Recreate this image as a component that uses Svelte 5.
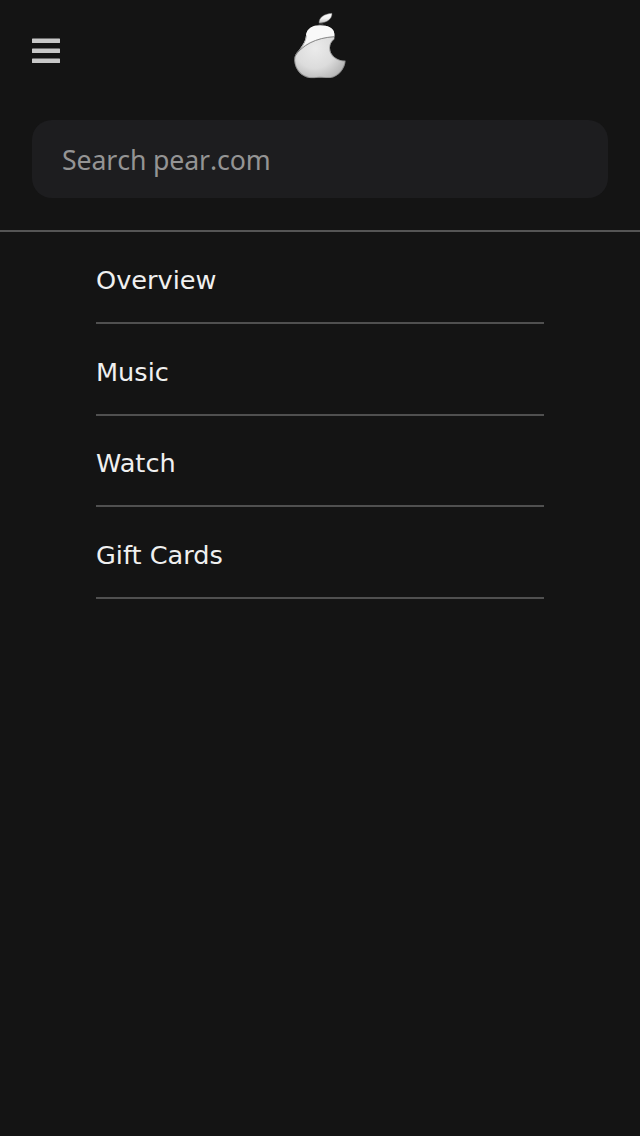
<script>
  const links = ['Overview', 'Music', 'Watch', 'Gift Cards'];
</script>

<div class="page">
  <header>
    <button class="toggle" aria-label="Menu">
      <svg width="28" height="26" viewBox="0 0 28 26">
        <g fill="#c8c8c8">
          <rect x="0" y="0.5" width="28" height="4.5" rx=".6" />
          <rect x="0" y="10.5" width="28" height="4.5" rx=".6" />
          <rect x="0" y="20.5" width="28" height="4.5" rx=".6" />
        </g>
      </svg>
    </button>
    <svg class="logo" width="80" height="80" viewBox="0 0 240 240">
      <defs>
        <radialGradient id="body" cx="105" cy="130" r="100" gradientUnits="userSpaceOnUse">
          <stop offset="0" stop-color="#ebebeb" />
          <stop offset=".6" stop-color="#dcdcdc" />
          <stop offset="1" stop-color="#b8b8b8" />
        </radialGradient>
        <linearGradient id="leaf" x1="0" y1="0" x2="0" y2="1">
          <stop offset="0" stop-color="#ffffff" />
          <stop offset=".55" stop-color="#f0f0f0" />
          <stop offset="1" stop-color="#bcbcbc" />
        </linearGradient>
        <clipPath id="shape">
          <path d="M120 61C97 61 81 71 78 91C77 109 68 121 57 135C48 144 42 154 43 167C45 196 65 214 88 219C101 221 109 218 120 218C132 218 137 220 151 219C177 214 195 191 197 167C169 167 150 150 150 129C150 118 155 109 163 103V87C163 70 144 61 120 61Z" />
        </clipPath>
      </defs>
      <g clip-path="url(#shape)">
        <rect width="240" height="240" fill="url(#body)" />
        <path d="M30 160C57 122 103 96 170 94V50H30Z" fill="#f9f9f9" />
        <path d="M43 155C66 122 105 98 165 95" fill="none" stroke="#868686" stroke-width="3" />
        <path d="M78 91C77 109 68 121 57 135C48 144 42 154 43 167C45 196 65 214 88 219C101 221 109 218 120 218C132 218 137 220 151 219C177 214 195 191 197 167C169 167 150 150 150 129C150 118 155 109 163 103" fill="none" stroke="#606060" stroke-opacity=".55" stroke-width="5" />
      </g>
      <path d="M117 54C116 38 133 26 156 25C157 43 138 55 117 54Z" fill="url(#leaf)" stroke="#666" stroke-width="1.5" />
      <path d="M116 58C121 56 126 57 130 58" fill="none" stroke="#777" stroke-width="2" />
    </svg>
  </header>

  <div class="search">
    <input type="text" placeholder="Search pear.com" aria-label="Search pear.com" />
  </div>

  <nav>
    {#each links as link}
      <a href="#top">{link}</a>
    {/each}
  </nav>
</div>

<style>
  :global(body) {
    background: #141414;
  }
  .page {
    min-height: 1136px;
    background: #141414;
    font-family: "DejaVu Sans", sans-serif;
  }
  header {
    height: 120px;
    box-sizing: border-box;
    display: grid;
    grid-template-columns: 28px 80px 28px;
    justify-content: space-between;
    align-items: start;
    padding: 5px 32px 0;
  }
  .toggle {
    margin: 33px 0 0;
    padding: 0;
    border: 0;
    background: none;
    height: 26px;
  }
  svg {
    display: block;
  }
  .search {
    padding: 0 32px 32px;
    border-bottom: 2px solid #555;
  }
  input {
    display: block;
    box-sizing: border-box;
    width: 100%;
    height: 78px;
    padding: 2px 30px;
    border: 0;
    border-radius: 20px;
    background: #1d1d1f;
    color: #f5f5f7;
    font: 26.67px "Noto Sans", sans-serif;
    font-kerning: none;
    letter-spacing: -0.11px;
    outline: none;
  }
  input::placeholder {
    color: #949494;
    opacity: 1;
  }
  nav {
    padding: 0 96px;
  }
  a {
    display: block;
    box-sizing: border-box;
    height: 91.8px;
    padding-top: 31.8px;
    border-bottom: 2px solid #505050;
    color: #f0f0f0;
    font-size: 25.6px;
    line-height: 32px;
    text-decoration: none;
  }
</style>
